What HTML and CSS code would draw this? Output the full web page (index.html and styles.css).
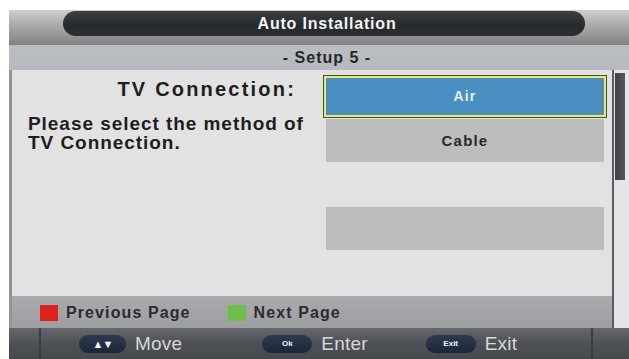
FILE: index.html
```html
<!DOCTYPE html>
<html>
<head>
<meta charset="utf-8">
<link rel="stylesheet" href="styles.css">
</head>
<body>
<div class="screen">
  <div class="titlebar">
    <div class="title-pill">Auto Installation</div>
  </div>
  <div class="subtitle">- Setup 5 -</div>
  <div class="middle">
    <div class="content">
      <div class="main">
        <div class="info">
          <div class="heading">TV Connection:</div>
          <div class="desc">Please select the method of<br>TV Connection.</div>
        </div>
        <div class="list">
          <div class="item selected">Air</div>
          <div class="item">Cable</div>
          <div class="item blank"></div>
          <div class="item"></div>
        </div>
      </div>
      <div class="legend">
        <span class="key red"></span><span class="key-label">Previous Page</span>
        <span class="key green"></span><span class="key-label">Next Page</span>
      </div>
    </div>
    <div class="scroll">
      <div class="thumb"></div>
    </div>
  </div>
  <div class="navbar">
    <div class="nav-inner">
      <div class="nav-item"><span class="btn arrows">&#9650;&#9660;</span><span class="nav-label">Move</span></div>
      <div class="nav-item"><span class="btn small">Ok</span><span class="nav-label">Enter</span></div>
      <div class="nav-item"><span class="btn small">Exit</span><span class="nav-label">Exit</span></div>
    </div>
  </div>
</div>
</body>
</html>
```

FILE: styles.css
```css
html, body {
  margin: 0;
  padding: 0;
  background: #ffffff;
}
body {
  font-family: "Liberation Sans", Arial, sans-serif;
  width: 629px;
  height: 359px;
  overflow: hidden;
}
.screen {
  margin: 10px 0 0 9px;
  width: 620px;
  height: 349px;
  display: flex;
  flex-direction: column;
}
.titlebar {
  height: 35px;
  background: linear-gradient(#cfcfcf 0%, #a9a9a9 45%, #828282 100%);
  padding-top: 1px;
  box-sizing: border-box;
  padding-left: 54px;
  padding-right: 44px;
}
.title-pill {
  height: 25px;
  border-radius: 13px;
  background: linear-gradient(#3c4042, #26292b 60%, #2c3032);
  color: #f4f4f4;
  font-weight: bold;
  font-size: 16px;
  letter-spacing: 0.8px;
  line-height: 25px;
  text-align: center;
  padding-left: 6px;
}
.subtitle {
  height: 25px;
  background: linear-gradient(#babdc1, #b6b9bd);
  color: #26282a;
  font-weight: bold;
  font-size: 16px;
  letter-spacing: 1px;
  line-height: 25px;
  text-align: center;
  padding-left: 16px;
}
.middle {
  display: flex;
  height: 258px;
}
.content {
  flex: 1;
  display: flex;
  flex-direction: column;
  border-left: 3px solid #959595;
}
.main {
  height: 226px;
  background: #e2e2e2;
  display: flex;
}
.info {
  width: 298px;
  padding-top: 8px;
  box-sizing: border-box;
}
.heading {
  font-weight: bold;
  font-size: 20px;
  line-height: 22px;
  letter-spacing: 2.2px;
  color: #1e1e1e;
  text-align: right;
  padding-right: 14px;
}
.desc {
  margin-top: 14px;
  padding-left: 16px;
  font-weight: bold;
  font-size: 19px;
  line-height: 19px;
  letter-spacing: 0.95px;
  color: #1e1e1e;
}
.list {
  width: 284px;
  margin-left: 13px;
  padding-top: 5px;
  display: flex;
  flex-direction: column;
  gap: 1px;
}
.item {
  height: 43px;
  margin: 0 3px;
  background: #bdbdbd;
  color: #2a2a2a;
  font-weight: bold;
  font-size: 15px;
  letter-spacing: 1.2px;
  line-height: 43px;
  text-align: center;
}
.item.blank {
  background: transparent;
}
.item.selected {
  margin: 0;
  height: 43px;
  box-sizing: border-box;
  border: 3px solid #e3ec6c;
  outline: 1px solid #4a4a2e;
  outline-offset: -1px;
  background: #4b8ec2;
  color: #e4f2fb;
  line-height: 37px;
  font-size: 14px;
}
.legend {
  height: 32px;
  background: linear-gradient(#a9abaf, #9c9ea2);
  display: flex;
  align-items: center;
  padding-left: 28px;
  padding-top: 2px;
  box-sizing: border-box;
}
.key {
  width: 18px;
  height: 16px;
}
.key.red {
  background: #e0201c;
}
.key.green {
  background: #6cc04a;
  margin-left: 37px;
}
.key-label {
  margin-left: 8px;
  font-weight: bold;
  font-size: 16px;
  letter-spacing: 1.1px;
  color: #2c2c2e;
}
.scroll {
  width: 17px;
  background: #e4e6ea;
  border-left: 2px solid #5a5c60;
  box-sizing: border-box;
  padding: 3px 4px 0 1px;
}
.thumb {
  height: 107px;
  background: linear-gradient(90deg, #3e4246, #55595d);
}
.navbar {
  height: 31px;
  background: linear-gradient(#65686c, #4d5054 50%, #46494d);
  padding-left: 30px;
  padding-right: 36px;
}
.nav-inner {
  height: 100%;
  border-left: 2px solid #3a3c40;
  border-right: 2px solid #3a3c40;
  display: flex;
  align-items: center;
  padding-left: 38px;
  padding-top: 1px;
  box-sizing: border-box;
}
.nav-item {
  display: flex;
  align-items: center;
}
.nav-item + .nav-item {
  margin-left: 80px;
}
.nav-item:nth-child(3) {
  margin-left: 58px;
}
.btn {
  width: 48px;
  height: 18px;
  border-radius: 9px;
  background: linear-gradient(#2c3a52, #1c2638);
  color: #eef2f8;
  font-weight: bold;
  text-align: center;
  line-height: 18px;
}
.btn.arrows {
  font-size: 11px;
  letter-spacing: -1px;
  width: 47px;
}
.btn.small {
  font-size: 8px;
  width: 50px;
}
.nav-label {
  margin-left: 9px;
  font-size: 19px;
  color: #d6d8da;
  letter-spacing: 0.2px;
}
```
